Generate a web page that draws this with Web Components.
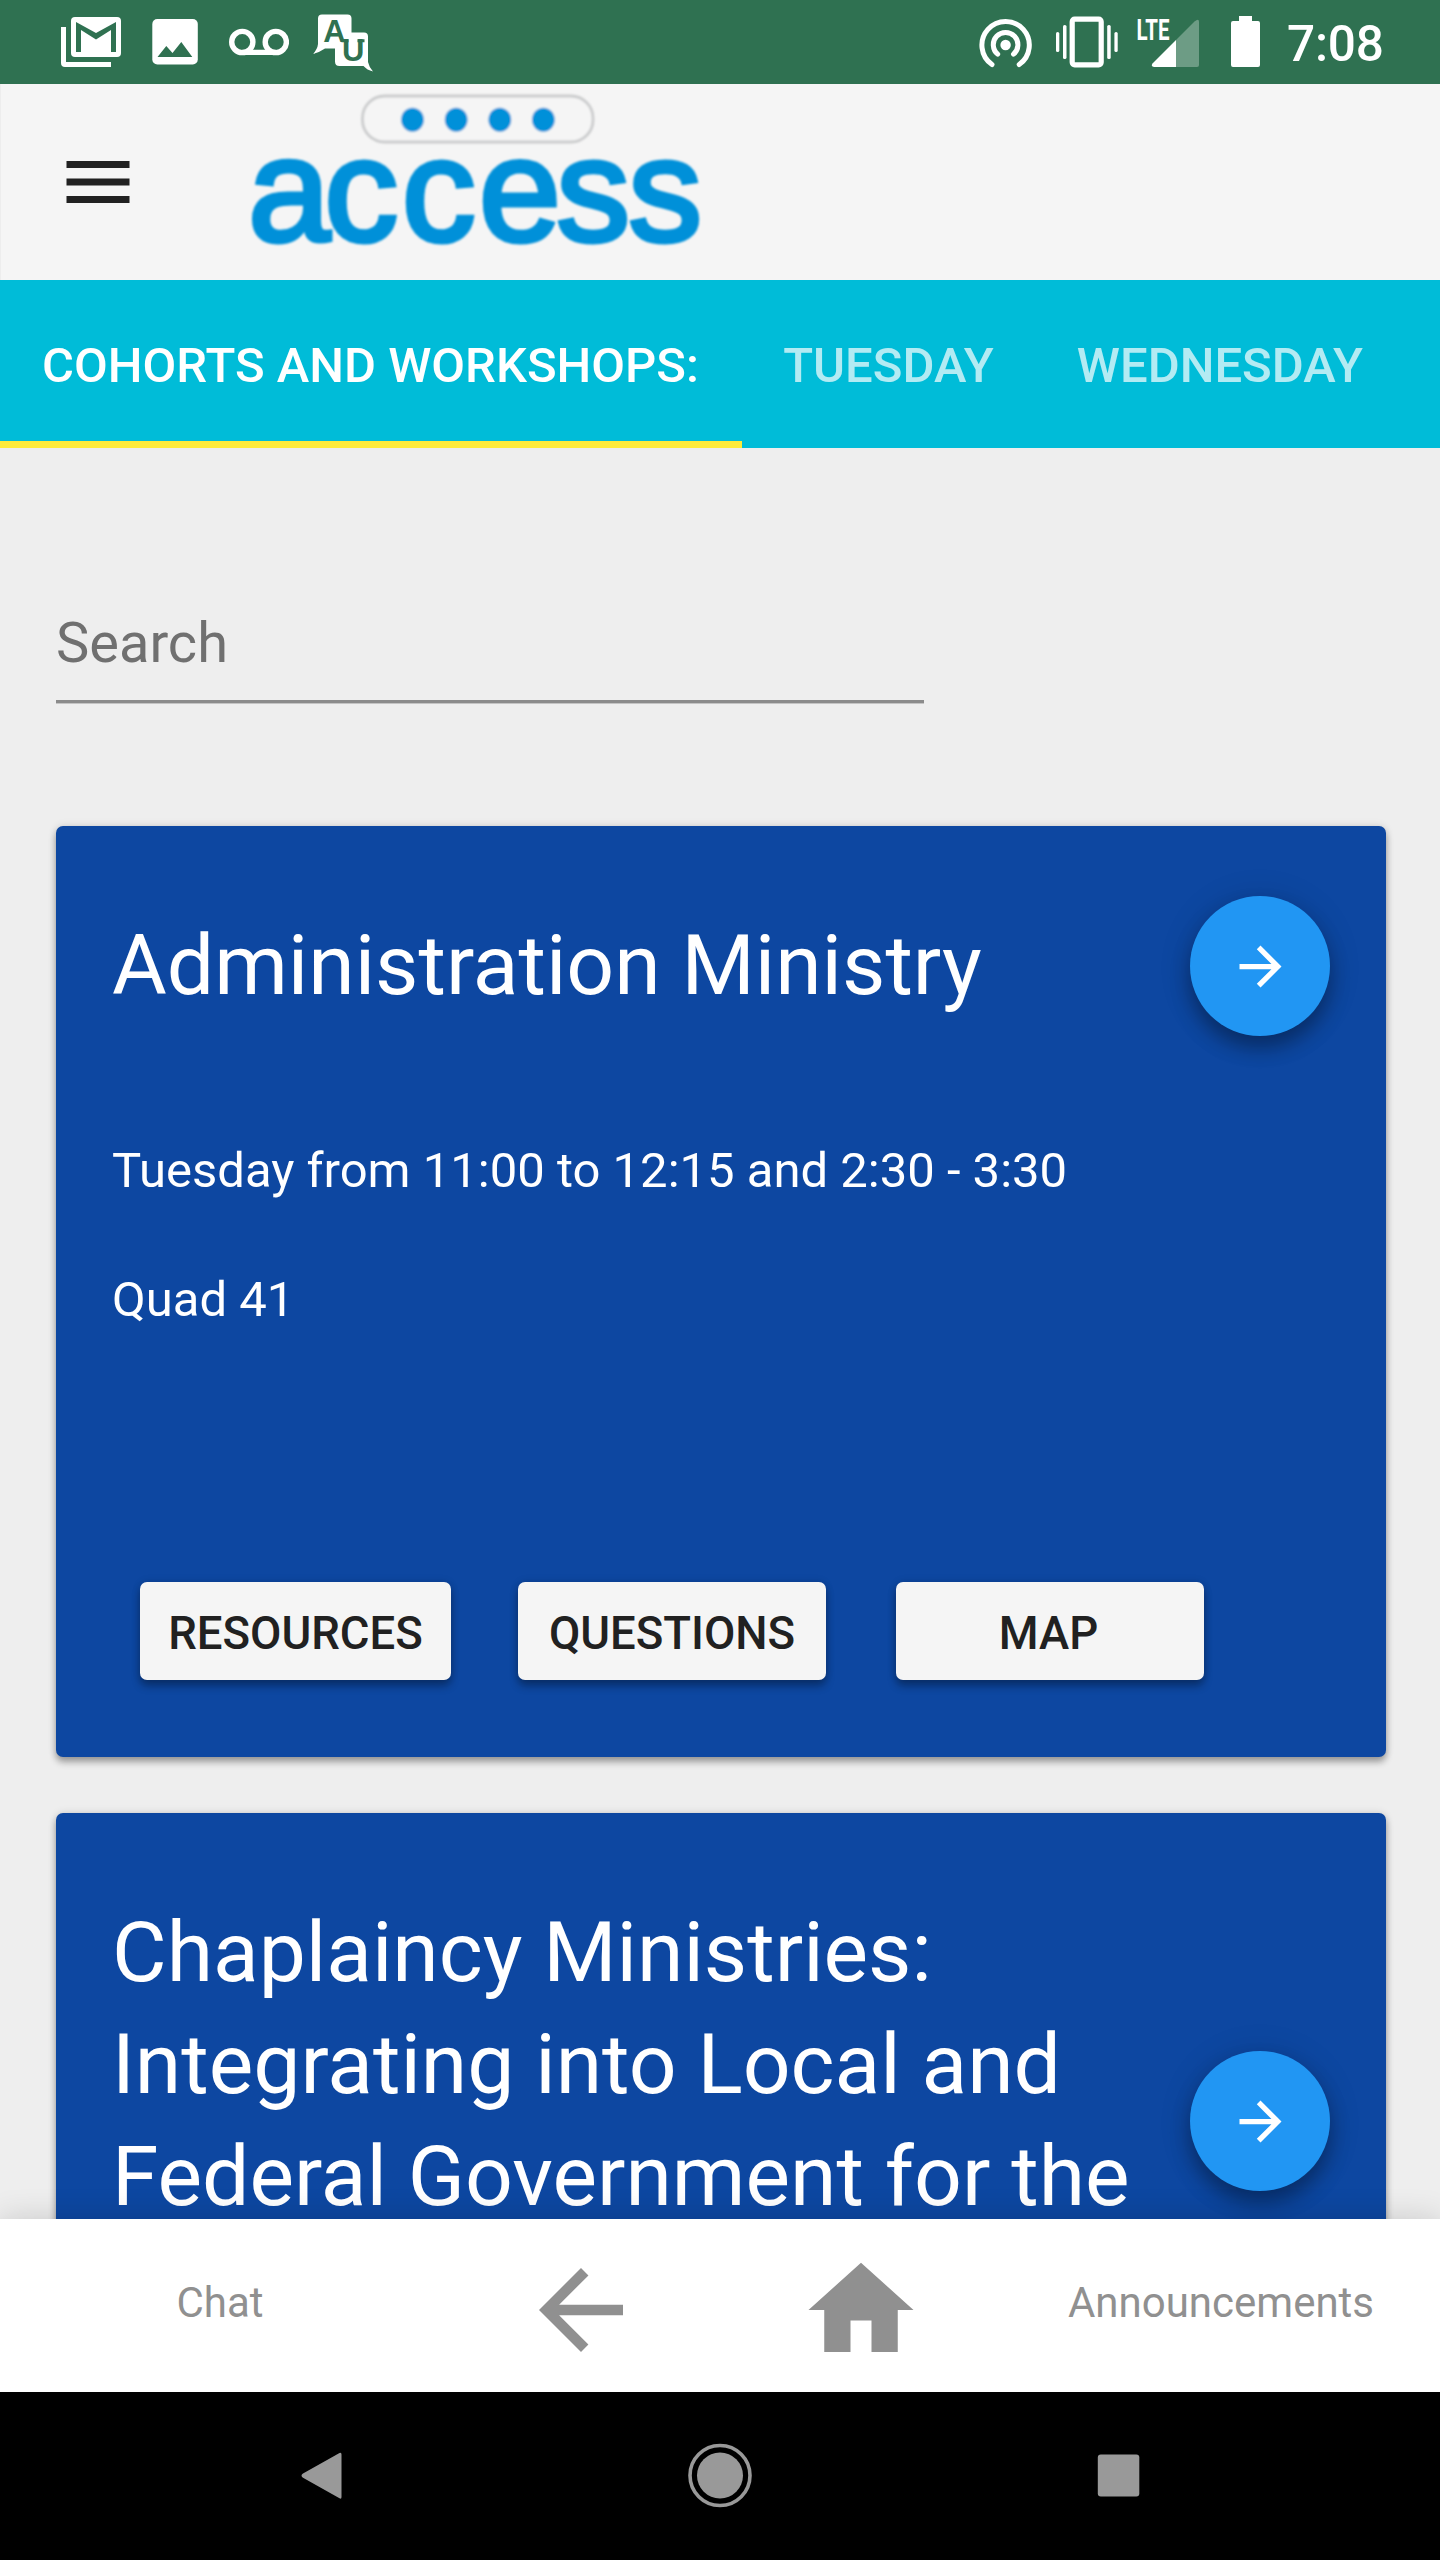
<!DOCTYPE html>
<html lang="en">
<head>
<meta charset="utf-8">
<title>Access</title>
<style>
html,body{margin:0;padding:0}
body{width:1440px;height:2560px;overflow:hidden;background:#eee;font-family:Roboto,"Noto Sans",sans-serif}
</style>
</head>
<body>
<access-app></access-app>
<script>
const define = (name, html) => customElements.define(name, class extends HTMLElement {
  constructor() {
    super();
    const t = document.createElement('template');
    t.innerHTML = html;
    this.attachShadow({mode: 'open'}).append(t.content.cloneNode(true));
  }
});

define('status-bar', `
<style>
:host{display:flex;height:84px;background:#2f7151;color:#fff;padding:0 56px 0 61px;box-sizing:border-box}
svg{display:block;height:84px;flex:none;fill:#fff}
.left{display:flex;gap:24px;flex:1}
.right{display:flex}
.time{width:97px;margin-left:27px;font-size:49.5px;font-weight:500;line-height:84px;padding-top:2px;letter-spacing:-.2px;white-space:nowrap;box-sizing:border-box}
</style>
<div class="left">
<svg width="60" viewBox="61 0 60 84"><path d="M61 27h5v35h45v5H65a4 4 0 0 1-4-4z"/><rect x="71" y="17" width="50" height="40" rx="4"/><path fill="#2f7151" d="M76 52V22l20 11 20-11v30h-5V30l-15 9.500-15-9.500v22z"/></svg>
<svg width="60" viewBox="145 0 60 84"><rect x="152.300" y="19" width="45.500" height="45.500" rx="5"/><path fill="#2f7151" d="M157.500 57l8.800-11 6.200 7 8.800-11L192.300 57z"/></svg>
<svg width="60" viewBox="229 0 60 84"><g fill="none" stroke="#fff" stroke-width="5.400"><circle cx="242.300" cy="42" r="10.600"/><circle cx="275.800" cy="42" r="10.600"/><path d="M242 52.400h34"/></g></svg>
<svg width="60" viewBox="313 0 60 84"><path d="M322 14.500h25.500q4 0 4 4V32.500h12.500q4 0 4 4V62q1 5 5 9.500-6-1.500-9.500-5.500h-24q-4.500 0-4.500-4.500V48.500h-10q-5 3.500-12 5.500 4.500-5 5-10v-25.500q0-4 4-4z"/><g fill="#2f7151" font-family="Liberation Sans" font-weight="700" font-size="31"><text x="323.300" y="42">A</text><text x="342" y="60.500">U</text></g><path stroke="#2f7151" stroke-width="3" d="M341.500 40.700h7M357.500 40.700h7"/></svg>
</div>
<div class="right">
<svg width="54" viewBox="979 0 54 84"><circle cx="1005.600" cy="45" r="5.200"/><g fill="none" stroke="#fff" stroke-width="5" stroke-linecap="round"><path d="M997.700 54.200a12.300 12.300 0 1 1 15.800 0M992 64.500a23.700 23.700 0 1 1 27.200 0"/></g></svg>
<svg width="62" viewBox="1056 0 62 84" style="margin-left:23px"><rect x="1072.200" y="19.200" width="29" height="45.600" rx="2.500" fill="none" stroke="#fff" stroke-width="5.200"/><rect x="1056" y="32" width="3.300" height="20" rx="1.600"/><rect x="1063" y="25" width="3.500" height="34" rx="1.600"/><rect x="1107.200" y="25" width="3.500" height="34" rx="1.600"/><rect x="1114.400" y="32" width="3.300" height="20" rx="1.600"/></svg>
<svg width="63" viewBox="1137 0 63 84" style="margin-left:19px"><text x="1136.500" y="39.500" font-family="Roboto" font-weight="700" font-size="29.500" textLength="33" lengthAdjust="spacingAndGlyphs">LTE</text><path fill-opacity=".3" d="M1176 40l18.500-18.500q4.500-3.500 4.500.500v43q0 2-2 2h-21z"/><path d="M1176 40v27h-22q-3.500-.500-1.500-3.500z"/></svg>
<svg width="29" viewBox="1231 0 29 84" style="margin-left:31px"><path d="M1239 16h13v5h6q2 0 2 2v42q0 2-2 2h-25q-2 0-2-2V23q0-2 2-2h6z"/></svg>
<div class="time">7:08</div>
</div>`);

define('app-bar', `
<style>
:host{display:flex;align-items:flex-start;height:196px;background:#f5f5f5;padding-left:56px;box-sizing:border-box;box-shadow:inset 1px 0 #ededed}
.menu{margin-top:56px;fill:#212121}
.logo{margin-left:108px;overflow:visible}
svg{display:block}
</style>
<svg class="menu" width="84" height="84" viewBox="0 0 24 24"><path d="M3 18h18v-2H3v2zm0-5h18v-2H3v2zm0-7v2h18V6H3z"/></svg>
<svg class="logo" width="460" height="196" viewBox="248 84 460 196">
<defs><filter id="soft"><feGaussianBlur stdDeviation=".8"/></filter></defs>
<g filter="url(#soft)"><rect x="362.500" y="96" width="230.500" height="46" rx="22" fill="#f5f5f5" stroke="#cbcccd" stroke-width="2.800"/>
<g fill="#0090d9"><ellipse cx="412.500" cy="119.700" rx="11.400" ry="12"/><ellipse cx="456.200" cy="119.700" rx="11.400" ry="12"/><ellipse cx="499.800" cy="119.700" rx="11.400" ry="12"/><ellipse cx="543.400" cy="119.700" rx="11.400" ry="12"/>
<text x="248.300 324.500 402 479 556.500 628.500" y="241" font-family="Liberation Sans" font-size="147" stroke="#0090d9" stroke-width="5">access</text></g></g>
</svg>`);

define('tab-item', `
<style>
:host{display:block;height:168px;box-sizing:border-box;padding:3px 42px 0;font-size:49px;font-weight:500;line-height:165px;white-space:nowrap;color:rgba(255,255,255,.7);flex:none}
:host([active]){color:#fff;border-bottom:7px solid #ffeb3b;width:742px}
:host(:not([active])){margin-left:-.8px}
</style><slot></slot>`);

define('tab-strip', `
<style>:host{display:flex;height:168px;background:#00bcd8;overflow:hidden}</style><slot></slot>`);

define('search-field', `
<style>
:host{display:block;width:868px;box-sizing:border-box;padding-bottom:24px;font-size:56px;line-height:66px;color:#707070}
:host{border-bottom:3px solid #8b8b8b;box-shadow:0 1px #c4c4c4}
</style><slot></slot>`);

define('round-button', `
<style>
:host{display:flex;align-items:center;justify-content:center;width:140px;height:140px;border-radius:50%;background:#2196f3;flex:none;margin:-14px 0;padding-top:1px;box-sizing:border-box;box-shadow:0 12px 20px rgba(0,0,0,.32),0 2px 34px rgba(0,0,0,.12)}
svg{fill:#fff;display:block}
</style>
<svg width="63" height="63" viewBox="0 0 24 24"><path d="M12 4l-1.410 1.410L16.170 11H4v2h12.170l-5.580 5.590L12 20l8-8z"/></svg>`);

define('raised-button', `
<style>
:host{display:block;justify-self:start;min-width:308px;height:98px;box-sizing:border-box;padding:5px 28px 0;border-radius:7px;background:#f5f5f5;color:#212121;font-size:45.5px;font-weight:500;line-height:93px;text-align:center;white-space:nowrap;box-shadow:0 6px 8px rgba(0,0,0,.32),0 0 8px rgba(0,0,0,.12)}
:host(:first-of-type){min-width:311px}
:host(:last-of-type){padding-right:31px}
</style><slot></slot>`);

define('session-card', `
<style>
:host{display:flex;flex-direction:column;height:931px;flex:none;box-sizing:border-box;padding:84px 56px 77px;border-radius:7px;background:#0d47a1;color:#fff;box-shadow:0 5px 7px rgba(0,0,0,.33),0 0 9px rgba(0,0,0,.12)}
header{display:flex;align-items:center;justify-content:space-between}
.title{font-size:84px;line-height:112px;white-space:nowrap}
.info{margin-top:117px;display:grid;gap:64.5px;font-size:49px;line-height:64.5px}
.actions{margin-top:auto;padding-left:28px;display:grid;grid-template-columns:repeat(3,378px)}
</style>
<header><div class="title"><slot name="title"></slot></div><round-button></round-button></header>
<div class="info"><slot name="info"></slot></div>
<div class="actions"><slot name="action"></slot></div>`);

define('bottom-bar', `
<style>
:host{display:grid;grid-template-columns:442px 278px 282px 438px;height:173px;background:#fff;color:#909090;position:relative;z-index:2;box-shadow:0 0 30px rgba(0,0,0,.16);font-size:42px;line-height:167px;text-align:center}
svg{display:block;width:126px;height:126px;margin:28px auto 0;fill:#909090}
.chat{padding-right:2px}
</style>
<span class="chat">Chat</span>
<svg viewBox="0 0 24 24"><path d="M20 11H7.830l5.590-5.590L12 4l-8 8 8 8 1.410-1.410L7.830 13H20v-2z"/></svg>
<svg viewBox="0 0 24 24"><path d="M10 20v-6h4v6h5v-8h3L12 3 2 12h3v8z"/></svg>
<span>Announcements</span>`);

define('system-bar', `
<style>
:host{display:flex;justify-content:center;height:168px;background:#000;position:relative;z-index:3}
svg{display:block;width:399px;height:168px;fill:#999}
</style>
<svg viewBox="121.5 2392 399 168"><path d="M341 2454.500v42.500q0 2.500-2 1.300l-36.500-20.500q-3-2.200 0-4.300l36.500-20.500q2-1 2 1.500z"/></svg>
<svg viewBox="520.5 2392 399 168"><circle cx="719.500" cy="2475.500" r="23"/><circle cx="719.500" cy="2475.500" r="30" fill="none" stroke="#999" stroke-width="3.600"/></svg>
<svg viewBox="919.5 2392 399 168"><rect x="1097.300" y="2454.500" width="41.500" height="42" rx="3"/></svg>`);

define('access-app', `
<style>
:host{display:flex;flex-direction:column;width:1440px;height:2560px}
main{flex:1;min-height:0;overflow:hidden;background:#eee;padding:162px 54px 0 56px;display:flex;flex-direction:column}
.list{margin-top:123px;display:flex;flex-direction:column;gap:56px}
.long{height:448px}
.long span{display:block}
</style>
<status-bar></status-bar>
<app-bar></app-bar>
<tab-strip><tab-item active>COHORTS AND WORKSHOPS:</tab-item><tab-item>TUESDAY</tab-item><tab-item>WEDNESDAY</tab-item></tab-strip>
<main>
<search-field>Search</search-field>
<div class="list">
<session-card>
<div slot="title">Administration Ministry</div>
<div slot="info">Tuesday from 11:00 to 12:15 and 2:30 - 3:30</div>
<div slot="info">Quad 41</div>
<raised-button slot="action">RESOURCES</raised-button>
<raised-button slot="action">QUESTIONS</raised-button>
<raised-button slot="action">MAP</raised-button>
</session-card>
<session-card>
<div slot="title" class="long"><span>Chaplaincy Ministries:</span><span>Integrating into Local and</span><span>Federal Government for the</span></div>
</session-card>
</div>
</main>
<bottom-bar></bottom-bar>
<system-bar></system-bar>`);
</script>
</body>
</html>
